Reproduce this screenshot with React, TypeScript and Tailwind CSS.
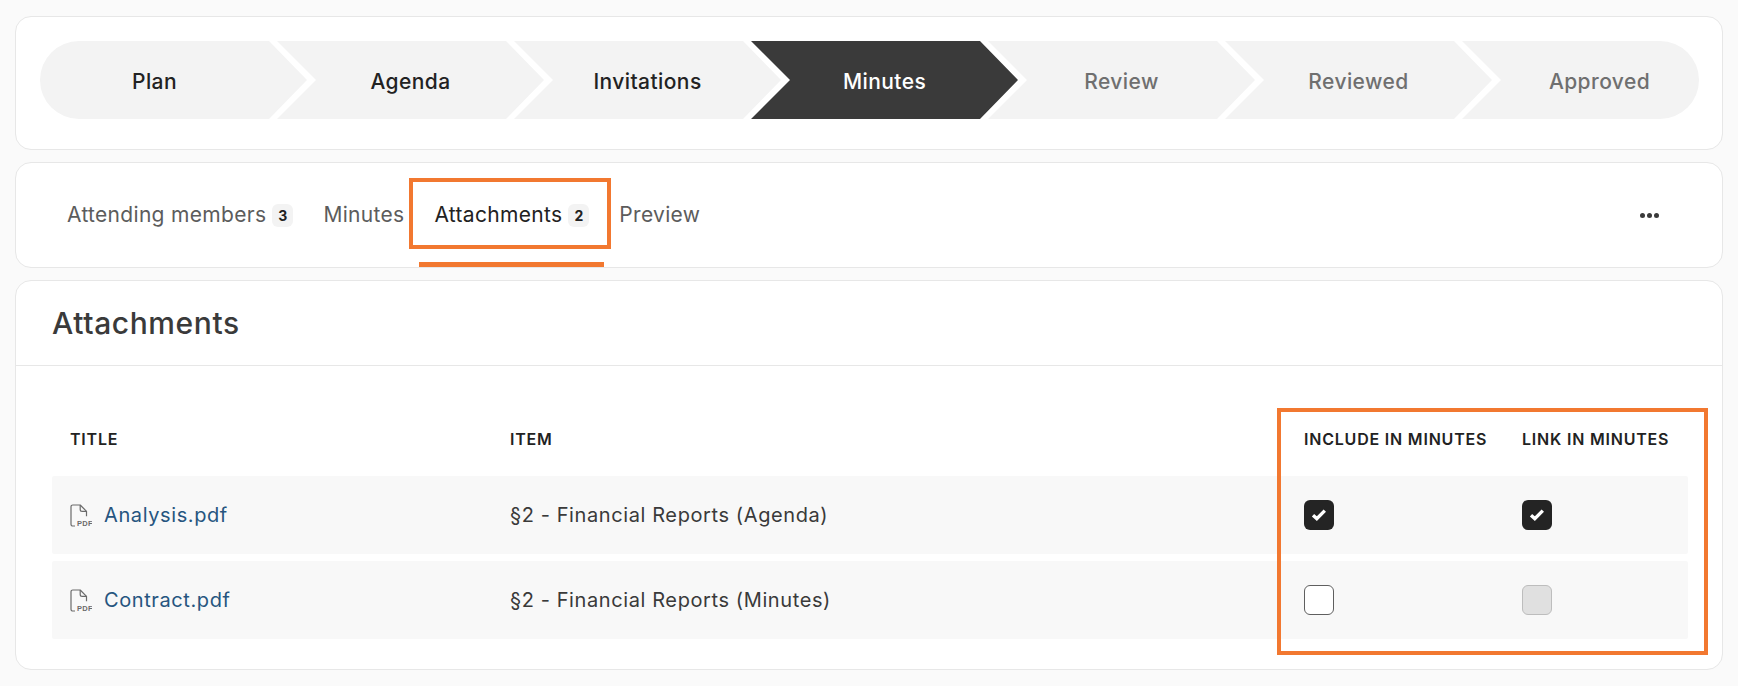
import type { ReactNode } from 'react';

const FONT = 'font-["Inter","Liberation_Sans",sans-serif]';

const STEPS = [
  { label: 'Plan', state: 'done' },
  { label: 'Agenda', state: 'done' },
  { label: 'Invitations', state: 'done' },
  { label: 'Minutes', state: 'active' },
  { label: 'Review', state: 'todo' },
  { label: 'Reviewed', state: 'todo' },
  { label: 'Approved', state: 'todo' },
];

const ROWS = [
  { title: 'Analysis.pdf', item: '§2 - Financial Reports (Agenda)', include: 'checked', link: 'checked' },
  { title: 'Contract.pdf', item: '§2 - Financial Reports (Minutes)', include: 'empty', link: 'disabled' },
];

function Step({ label, state, index }: { label: string; state: string; index: number }) {
  const isFirst = index === 0;
  const isLast = index === STEPS.length - 1;
  const tone =
    state === 'active'
      ? 'bg-[#3a3a3a] text-white'
      : state === 'done'
        ? 'bg-[#f3f3f3] text-[#222222]'
        : 'bg-[#f3f3f3] text-[#6f6f6f]';

  let shape = 'pt-[3px] [clip-path:polygon(0_0,229px_0,267px_50%,229px_100%,0_100%,39px_50%)]';
  if (isFirst) shape = 'rounded-l-[39px] pt-[3px] pr-[38px] [clip-path:polygon(0_0,229px_0,267px_50%,229px_100%,0_100%)]';
  if (isLast) shape = 'rounded-r-[39px] pt-[3px] pl-[38px] [clip-path:polygon(0_0,100%_0,100%_100%,0_100%,39px_50%)]';

  return (
    <div
      className={`flex h-[78px] shrink-0 items-center justify-center text-[21px] font-medium tracking-[0.02em] ${tone} ${shape} ${
        isLast ? 'w-[237px]' : 'w-[267px] -mr-[30px]'
      }`}
    >
      {label}
    </div>
  );
}

function Count({ value }: { value: number }) {
  return (
    <span className="ml-[6px] flex h-[23px] w-[21px] items-center justify-center rounded-[6px] bg-[#f3f3f3] text-[14px] font-bold tracking-normal text-[#222222]">
      {value}
    </span>
  );
}

function Tab({ active, children }: { active?: boolean; children: ReactNode }) {
  return (
    <div
      className={`relative flex h-full items-center px-[15px] text-[21px] tracking-[0.015em] ${
        active ? 'text-[#222222]' : 'text-[#5c5c5c]'
      }`}
    >
      {children}
      {active && (
        <>
          <span className="absolute -left-[10px] -right-[7px] top-[15px] h-[71px] border-4 border-[#f27830]" />
          <span className="absolute inset-x-0 bottom-0 h-[5px] bg-[#f27830]" />
        </>
      )}
    </div>
  );
}

function PdfIcon() {
  return (
    <svg width="22" height="23" viewBox="0 0 22 23" fill="none" className="shrink-0">
      <path
        d="M5 22H2.8C1.8 22 1 21.2 1 20.2V2.8C1 1.8 1.8 1 2.8 1h7.4l6.3 6.3v5"
        stroke="#6b6b6b"
        strokeWidth="1.2"
        strokeLinejoin="round"
      />
      <path d="M10.2 1v4.4c0 1 .9 1.9 1.9 1.9h4.4" stroke="#6b6b6b" strokeWidth="1.2" />
      <text x="7" y="22" fontSize="7.5" fontWeight="700" fill="#6b6b6b" fontFamily="Liberation Sans" letterSpacing="0.3">
        PDF
      </text>
    </svg>
  );
}

function CheckBox({ state }: { state: string }) {
  if (state === 'checked') {
    return (
      <span className="flex size-[30px] items-center justify-center rounded-[6px] bg-[#242424]">
        <svg width="16" height="14" viewBox="0 0 16 14" fill="none">
          <path d="M2 7.3 5.8 10.6 13.8 2.6" stroke="#ffffff" strokeWidth="3.4" />
        </svg>
      </span>
    );
  }
  if (state === 'disabled') {
    return <span className="size-[30px] rounded-[6px] border border-[#bdbdbd] bg-[#e0e0e0]" />;
  }
  return <span className="size-[30px] rounded-[6px] border border-[#5f5f5f] bg-white" />;
}

export default function App() {
  return (
    <div className={`min-h-[686px] bg-[#fafafa] px-[15px] pt-[16px] ${FONT}`}>
      {/* Workflow steps */}
      <div className="flex rounded-[16px] border border-[#e7e7e7] bg-white px-[24px] pt-[24px] pb-[30px]">
        {STEPS.map((step, i) => (
          <Step key={step.label} label={step.label} state={step.state} index={i} />
        ))}
      </div>

      {/* Tabs */}
      <div className="mt-[12px] flex h-[106px] items-stretch rounded-[16px] border border-[#e7e7e7] bg-white pl-[36px] pr-[63px]">
        <Tab>
          Attending members <Count value={3} />
        </Tab>
        <Tab>Minutes</Tab>
        <Tab active>
          Attachments <Count value={2} />
        </Tab>
        <Tab>Preview</Tab>
        <div className="ml-auto flex items-center gap-[2px]">
          <span className="size-[5px] rounded-full bg-[#3a3a3a]" />
          <span className="size-[5px] rounded-full bg-[#3a3a3a]" />
          <span className="size-[5px] rounded-full bg-[#3a3a3a]" />
        </div>
      </div>

      {/* Attachments */}
      <div className="relative mt-[12px] h-[390px] rounded-[16px] border border-[#e7e7e7] bg-white">
        <div className="flex h-[85px] items-center border-b border-[#e7e7e7] pt-[1px] pl-[36px] text-[30px] font-medium tracking-[0.02em] text-[#3a3a3a]">
          Attachments
        </div>
        <div className="pl-[36px] pr-[34px]">
          <div className="grid h-[110px] grid-cols-[440px_794px_218px_1fr] items-center pl-[18px] pt-[35px] text-[16px] font-semibold tracking-[0.05em] text-[#222222]">
            <div>TITLE</div>
            <div>ITEM</div>
            <div>INCLUDE IN MINUTES</div>
            <div>LINK IN MINUTES</div>
          </div>
          <div className="flex flex-col gap-[7px]">
            {ROWS.map((row) => (
              <div
                key={row.title}
                className="grid h-[78px] grid-cols-[440px_794px_218px_1fr] items-center rounded-[2px] bg-[#f8f8f8] pl-[18px] text-[20px] tracking-[0.03em]"
              >
                <div className="flex items-center gap-[12px] text-[#26557f]">
                  <PdfIcon />
                  {row.title}
                </div>
                <div className="text-[#3a3a3a]">{row.item}</div>
                <div className="flex">
                  <CheckBox state={row.include} />
                </div>
                <div className="flex">
                  <CheckBox state={row.link} />
                </div>
              </div>
            ))}
          </div>
        </div>
        <span className="absolute left-[1261px] top-[127px] h-[247px] w-[431px] border-4 border-[#f27830]" />
      </div>
    </div>
  );
}
